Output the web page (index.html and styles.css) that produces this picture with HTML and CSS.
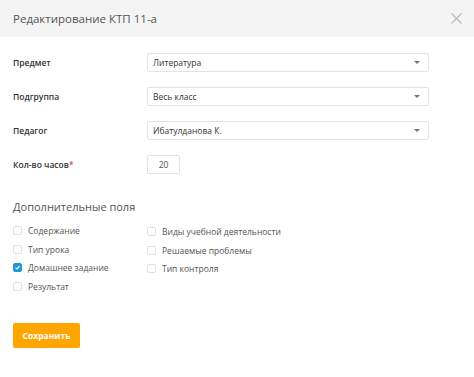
FILE: index.html
```html
<!DOCTYPE html>
<html lang="ru">
<head>
<meta charset="utf-8">
<link rel="stylesheet" href="styles.css">
</head>
<body>
<div class="modal">
  <div class="header">
    <div class="title">Редактирование КТП 11-а</div>
    <svg class="close" width="11" height="11" viewBox="0 0 11 11"><path d="M0.5 0.5L10.5 10.5M10.5 0.5L0.5 10.5" stroke="#b8b8b8" stroke-width="1.1" fill="none"/></svg>
  </div>
  <div class="body">
    <div class="form">
      <div class="label">Предмет</div>
      <div class="select"><span>Литература</span><i class="caret"></i></div>
      <div class="label">Подгруппа</div>
      <div class="select"><span>Весь класс</span><i class="caret"></i></div>
      <div class="label">Педагог</div>
      <div class="select"><span>Ибатулданова К.</span><i class="caret"></i></div>
      <div class="label">Кол-во часов<span class="req">*</span></div>
      <div class="num">20</div>
    </div>
    <div class="section">Дополнительные поля</div>
    <div class="checks">
      <div class="col">
        <div class="check"><span class="box"></span>Содержание</div>
        <div class="check"><span class="box"></span>Тип урока</div>
        <div class="check"><span class="box on"><svg width="9" height="9" viewBox="0 0 9 9"><path d="M2 4.6L3.8 6.4L7.2 2.6" stroke="#fff" stroke-width="1.4" fill="none"/></svg></span>Домашнее задание</div>
        <div class="check"><span class="box"></span>Результат</div>
      </div>
      <div class="col col2">
        <div class="check"><span class="box"></span>Виды учебной деятельности</div>
        <div class="check"><span class="box"></span>Решаемые проблемы</div>
        <div class="check"><span class="box"></span>Тип контроля</div>
      </div>
    </div>
    <button class="save">Сохранить</button>
  </div>
</div>
</body>
</html>
```
FILE: styles.css
```css
html, body { margin: 0; padding: 0; background: #fff; }
body { font-family: "Open Sans", "Noto Sans", sans-serif; color: #444; }
.modal { width: 474px; }
.header {
  height: 37px;
  background: #f4f4f4;
  display: flex;
  align-items: center;
  justify-content: space-between;
  padding: 0 12px 0 13px;
}
.title { font-size: 11.5px; color: #555; }
.close { display: block; margin-top: 0; }
.body { padding: 16px 13px 0 13px; }
.form {
  display: grid;
  grid-template-columns: 134px 282px;
  grid-auto-rows: 19px;
  row-gap: 15px;
  align-items: center;
}
.label { font-size: 8.5px; font-weight: 600; color: #333; }
.req { color: #d9534f; }
.select {
  height: 19px;
  box-sizing: border-box;
  border: 1px solid #e2e2e2;
  border-radius: 2px;
  display: flex;
  align-items: center;
  justify-content: space-between;
  padding: 0 8px 0 5px;
  font-size: 8.5px;
  color: #333;
}
.caret {
  width: 0; height: 0;
  border-left: 3px solid transparent;
  border-right: 3px solid transparent;
  border-top: 3px solid #777;
}
.num {
  width: 33px; height: 19px;
  box-sizing: border-box;
  border: 1px solid #e2e2e2;
  border-radius: 2px;
  display: flex; align-items: center; justify-content: center;
  font-size: 8.5px; color: #555;
}
.section { margin-top: 25px; font-size: 11px; color: #555; line-height: 16px; }
.checks { display: flex; margin-top: 11px; }
.col { width: 134px; display: flex; flex-direction: column; gap: 9.5px; }
.col2 { margin-top: 1px; }
.check { display: flex; align-items: center; font-size: 8.5px; color: #555; line-height: 9px; height: 9px; }
.box {
  width: 9px; height: 9px;
  box-sizing: border-box;
  border: 1px solid #e0e0e0;
  border-radius: 2px;
  margin-right: 6px;
  flex: none;
  display: flex; align-items: center; justify-content: center;
}
.box.on { background: #1e98d7; border-color: #1e98d7; }
.box svg { display: block; }
.save {
  margin-top: 32px;
  width: 67px; height: 25px;
  background: #ffa500;
  border: none;
  border-radius: 2px;
  color: #fff;
  font-family: "Open Sans", sans-serif;
  font-weight: 700;
  font-size: 8.5px;
  padding: 0;
  box-shadow: 0 1px 1px rgba(0,0,0,0.08);
}
```
